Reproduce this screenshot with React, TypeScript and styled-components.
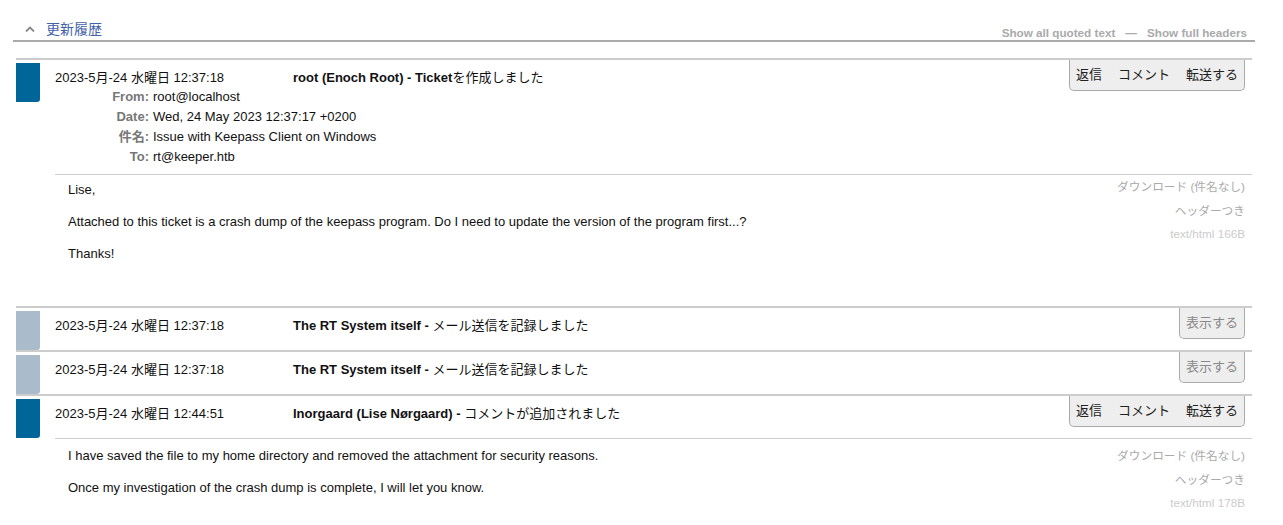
import React from "react";
import styled, { createGlobalStyle } from "styled-components";

const Global = createGlobalStyle`
  html, body { margin: 0; padding: 0; background: #fff; }
  body {
    font-family: "Liberation Sans", "Noto Sans CJK JP", sans-serif;
    font-size: 13px;
    color: #111;
  }
`;

const Page = styled.div`
  padding: 0 28px 0 13px;
`;

const HistoryHeader = styled.div`
  display: flex;
  align-items: flex-end;
  justify-content: space-between;
  height: 40px;
  border-bottom: 2px solid #aaa;
  padding: 0 8px 0 12px;
`;

const HistoryTitle = styled.div`
  display: flex;
  align-items: center;
  gap: 11px;
  line-height: 20px;
  margin-bottom: 1px;
  font-size: 14px;
  color: #4262a8;
`;

const HeaderLinks = styled.div`
  display: flex;
  gap: 10px;
  font-size: 11.7px;
  line-height: 14px;
  font-weight: bold;
  color: #aaa;
`;

const LinkText = styled.span`
  color: #aaa;
`;

const List = styled.div`
  margin: 16px 3px 0 3px;
`;

const Tx = styled.div`
  display: flex;
  border-top: 2px solid #ccc;
`;

const Bar = styled.div<{ $kind: "blue" | "grey" }>`
  flex: none;
  width: 24px;
  height: 39px;
  margin: 3px 15px 0 0;
  border-radius: 0 0 3px 0;
  background: ${(p) => (p.$kind === "blue" ? "#006699" : "#aabbcc")};
`;

const TxMain = styled.div`
  flex: 1;
  min-width: 0;
`;

const TxHead = styled.div`
  display: flex;
  align-items: flex-start;
  min-height: 42px;
`;

const TxInfo = styled.div`
  flex: 1;
  padding: 7px 0;
`;

const TitleLine = styled.div`
  display: flex;
  margin-top: 1px;
  line-height: 19px;
`;

const DateCell = styled.div`
  width: 238px;
  flex: none;
  color: #111;
`;

const Desc = styled.div`
  color: #111;
`;

const Strong = styled.b`
  font-weight: bold;
`;

const HeaderGrid = styled.div`
  display: grid;
  grid-template-columns: 94px auto;
  column-gap: 4px;
  line-height: 20px;
`;

const HLabel = styled.div`
  text-align: right;
  font-weight: bold;
  color: #777;
`;

const HValue = styled.div`
  color: #111;
`;

const ActionTab = styled.div`
  flex: none;
  display: flex;
  gap: 16px;
  height: 30px;
  padding: 0 6px;
  margin-right: 7px;
  line-height: 30px;
  font-size: 13px;
  background: #eee;
  border: 1px solid #aaa;
  border-top: none;
  border-radius: 0 0 5px 5px;
`;

const Action = styled.span<{ $muted?: boolean }>`
  color: ${(p) => (p.$muted ? "#888" : "#222")};
`;

const TxBody = styled.div<{ $pad: number }>`
  display: flex;
  justify-content: space-between;
  border-top: 1px solid #ccc;
  padding-bottom: ${(p) => p.$pad}px;
`;

const Message = styled.div<{ $top: number }>`
  padding: ${(p) => p.$top}px 0 0 13px;
  line-height: 16px;
`;

const Para = styled.p`
  margin: 0 0 16px;
  color: #111;
`;

const Attach = styled.div<{ $top: number }>`
  display: flex;
  flex-direction: column;
  align-items: flex-end;
  padding: ${(p) => p.$top}px 7px 0 0;
  font-size: 11.7px;
  line-height: 23.5px;
`;

const AttachItem = styled.span<{ $light?: boolean }>`
  color: ${(p) => (p.$light ? "#ccc" : "#aaa")};
`;

const Chevron = () => (
  <svg width="10" height="6" viewBox="0 0 10 6">
    <polyline points="1,5.5 5,1.5 9,5.5" fill="none" stroke="#888" strokeWidth="1.8" />
  </svg>
);

type Header = { label: string; value: string };

type TxData = {
  kind: "blue" | "grey";
  date: string;
  who: string;
  descBold?: string;
  desc: string;
  actions: "full" | "show";
  headers?: Header[];
  body?: string[];
  size?: string;
  pad?: number;
  msgTop?: number;
  attachTop?: number;
};

const txs: TxData[] = [
  {
    kind: "blue",
    date: "2023-5月-24 水曜日 12:37:18",
    who: "root (Enoch Root) - ",
    descBold: "Ticket",
    desc: "を作成しました",
    actions: "full",
    headers: [
      { label: "From:", value: "root@localhost" },
      { label: "Date:", value: "Wed, 24 May 2023 12:37:17 +0200" },
      { label: "件名:", value: "Issue with Keepass Client on Windows" },
      { label: "To:", value: "rt@keeper.htb" },
    ],
    body: [
      "Lise,",
      "Attached to this ticket is a crash dump of the keepass program. Do I need to update the version of the program first...?",
      "Thanks!",
    ],
    size: "166B",
    pad: 28,
    msgTop: 7,
    attachTop: 0,
  },
  {
    kind: "grey",
    date: "2023-5月-24 水曜日 12:37:18",
    who: "The RT System itself - ",
    desc: "メール送信を記録しました",
    actions: "show",
  },
  {
    kind: "grey",
    date: "2023-5月-24 水曜日 12:37:18",
    who: "The RT System itself - ",
    desc: "メール送信を記録しました",
    actions: "show",
  },
  {
    kind: "blue",
    date: "2023-5月-24 水曜日 12:44:51",
    who: "Inorgaard (Lise Nørgaard) - ",
    desc: "コメントが追加されました",
    actions: "full",
    body: [
      "I have saved the file to my home directory and removed the attachment for security reasons.",
      "Once my investigation of the crash dump is complete, I will let you know.",
    ],
    size: "178B",
    pad: 28,
    msgTop: 9,
    attachTop: 5,
  },
];

const Transaction = ({ t }: { t: TxData }) => (
  <Tx>
    <Bar $kind={t.kind} />
    <TxMain>
      <TxHead>
        <TxInfo>
          <TitleLine>
            <DateCell>{t.date}</DateCell>
            <Desc>
              <Strong>
                {t.who}
                {t.descBold}
              </Strong>
              {t.desc}
            </Desc>
          </TitleLine>
          {t.headers && (
            <HeaderGrid>
              {t.headers.map((h) => (
                <React.Fragment key={h.label}>
                  <HLabel>{h.label}</HLabel>
                  <HValue>{h.value}</HValue>
                </React.Fragment>
              ))}
            </HeaderGrid>
          )}
        </TxInfo>
        {t.actions === "full" ? (
          <ActionTab>
            <Action>返信</Action>
            <Action>コメント</Action>
            <Action>転送する</Action>
          </ActionTab>
        ) : (
          <ActionTab>
            <Action $muted>表示する</Action>
          </ActionTab>
        )}
      </TxHead>
      {t.body && (
        <TxBody $pad={t.pad ?? 0}>
          <Message $top={t.msgTop ?? 7}>
            {t.body.map((p, i) => (
              <Para key={i}>{p}</Para>
            ))}
          </Message>
          <Attach $top={t.attachTop ?? 0}>
            <AttachItem>ダウンロード (件名なし)</AttachItem>
            <AttachItem>ヘッダーつき</AttachItem>
            <AttachItem $light>text/html {t.size}</AttachItem>
          </Attach>
        </TxBody>
      )}
    </TxMain>
  </Tx>
);

export default function App() {
  return (
    <Page>
      <Global />
      <HistoryHeader>
        <HistoryTitle>
          <Chevron />
          更新履歴
        </HistoryTitle>
        <HeaderLinks>
          <LinkText>Show all quoted text</LinkText>
          <LinkText>—</LinkText>
          <LinkText>Show full headers</LinkText>
        </HeaderLinks>
      </HistoryHeader>
      <List>
        {txs.map((t, i) => (
          <Transaction key={i} t={t} />
        ))}
      </List>
    </Page>
  );
}
